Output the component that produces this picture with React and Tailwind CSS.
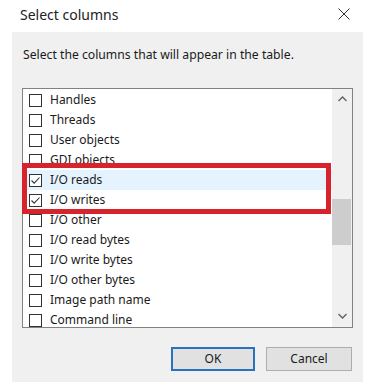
import React from 'react';

const items = [
  { label: 'Handles' },
  { label: 'Threads' },
  { label: 'User objects' },
  { label: 'GDI objects' },
  { label: 'I/O reads', checked: true, active: true },
  { label: 'I/O writes', checked: true },
  { label: 'I/O other' },
  { label: 'I/O read bytes' },
  { label: 'I/O write bytes' },
  { label: 'I/O other bytes' },
  { label: 'Image path name' },
  { label: 'Command line' },
];

const Check = ({ checked }) => (
  <span className="w-[13px] h-[13px] border border-[#333] bg-white flex items-center justify-center shrink-0">
    {checked && (
      <svg width="11" height="11" viewBox="0 0 11 11">
        <path d="M1.5 5.5 L4.2 8.2 L9.5 2.5" fill="none" stroke="#333" strokeWidth="1.1" />
      </svg>
    )}
  </span>
);

export default function App() {
  return (
    <div
      className="w-[389px] h-[382px] bg-white flex flex-col text-[#1a1a1a]"
      style={{ fontFamily: '"Noto Sans", "Open Sans", sans-serif' }}
    >
      <div className="h-8 flex items-center justify-between pl-5 pr-[39px] pb-[4px] shrink-0">
        <span className="text-[14px] text-[#222]">Select columns</span>
        <svg width="12" height="12" viewBox="0 0 12 12">
          <path d="M0.5 0.5 L11.5 11.5 M11.5 0.5 L0.5 11.5" stroke="#333" strokeWidth="1" />
        </svg>
      </div>

      <div className="ml-3 w-[351px] flex-1 bg-[#f0f0f0] relative pl-[10px]">
        <p className="text-[12.2px] pt-[15px] pl-[1px] h-[56px] leading-4">
          Select the columns that will appear in the table.
        </p>

        <div className="w-[331px] h-[240px] border border-[#828282] bg-white flex overflow-hidden">
          <div className="flex-1 pt-[1px] overflow-hidden">
            {items.map((it) => (
              <div
                key={it.label}
                className={`h-5 flex items-center gap-2 pl-[6px] text-[12px] ${it.active ? 'bg-[#e5f3ff]' : ''}`}
              >
                <Check checked={it.checked} />
                <span className="leading-none">{it.label}</span>
              </div>
            ))}
          </div>
          <div className="w-[20px] bg-[#f0f0f0] flex flex-col items-center">
            <div className="h-[20px] flex items-center justify-center">
              <svg width="9" height="6" viewBox="0 0 9 6">
                <path d="M0.5 5 L4.5 1 L8.5 5" fill="none" stroke="#606060" strokeWidth="1.3" />
              </svg>
            </div>
            <div className="flex-1 w-full flex flex-col">
              <div className="h-[90px]" />
              <div className="h-[46px] w-[19px] bg-[#cdcdcd]" />
            </div>
            <div className="h-[22px] flex items-center justify-center">
              <svg width="9" height="6" viewBox="0 0 9 6">
                <path d="M0.5 1 L4.5 5 L8.5 1" fill="none" stroke="#606060" strokeWidth="1.3" />
              </svg>
            </div>
          </div>
        </div>

        <div className="flex justify-end gap-[11px] pt-[19px] pr-[11px]">
          <button className="w-[84px] h-[24px] bg-[#e1e1e1] border-2 border-[#2a72c0] text-[12px]">
            OK
          </button>
          <button className="w-[86px] h-[24px] bg-[#e1e1e1] border border-[#adadad] text-[12px]">
            Cancel
          </button>
        </div>

        <div className="absolute left-[10px] top-[131px] w-[309px] h-[51px] border-[5px] border-[#d7232c]" />
      </div>
    </div>
  );
}
